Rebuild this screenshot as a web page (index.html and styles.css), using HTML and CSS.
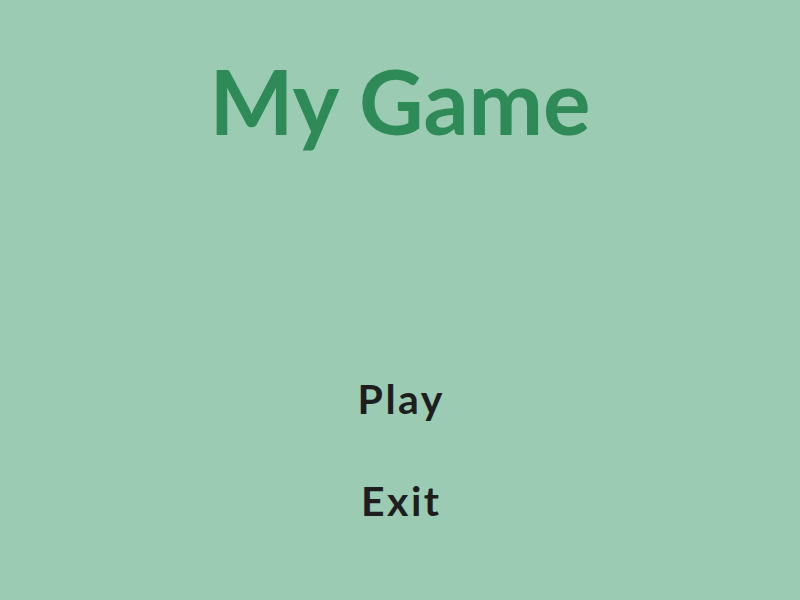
FILE: index.html
```html
<!DOCTYPE html>
<html>
<head>
<meta charset="utf-8">
<link rel="stylesheet" href="styles.css">
</head>
<body>
<main class="screen">
  <h1 class="title">My Game</h1>
  <nav class="menu">
    <button class="menu-item">Play</button>
    <button class="menu-item">Exit</button>
  </nav>
</main>
</body>
</html>
```
FILE: styles.css
```css
html, body {
  margin: 0;
  padding: 0;
  width: 800px;
  height: 600px;
  background: #9bcbb3;
  overflow: hidden;
}
.screen {
  display: flex;
  flex-direction: column;
  align-items: center;
  height: 600px;
}
.title {
  margin: 46px 0 0;
  font-family: "Lato", sans-serif;
  font-weight: 700;
  font-size: 89px;
  line-height: 110px;
  color: #2e8b57;
}
.menu {
  display: flex;
  flex-direction: column;
  align-items: center;
  margin-top: 218px;
  gap: 52px;
}
.menu-item {
  background: none;
  border: 0;
  padding: 0 0 0 2.5px;
  font-family: "Lato", sans-serif;
  font-weight: 700;
  font-size: 41px;
  line-height: 50px;
  letter-spacing: 2.5px;
  color: #1e1e1e;
}
```
